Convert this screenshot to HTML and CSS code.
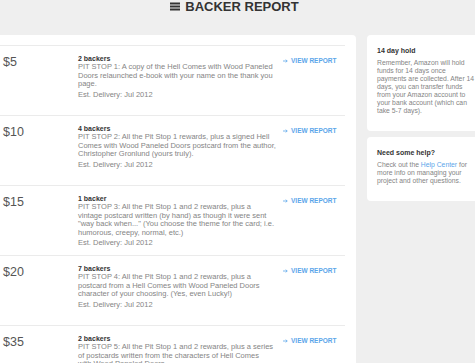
FILE: index.html
```html
<!DOCTYPE html>
<html>
<head>
<meta charset="utf-8">
<link rel="stylesheet" href="styles.css">
</head>
<body>
<header class="page-head">
  <svg class="menu-icon" width="10" height="9" viewBox="0 0 10 9"><rect x="0" y="0.5" width="10" height="2" fill="#333"/><rect x="0" y="3.5" width="10" height="2" fill="#333"/><rect x="0" y="6.5" width="10" height="2" fill="#333"/></svg>
  <h1 class="page-title">BACKER REPORT</h1>
</header>
<div class="layout">
  <main class="card rewards">
    <div class="reward-list">
      <div class="reward">
        <div class="amount">$5</div>
        <div class="info">
          <div class="backers">2 backers</div>
          <p class="desc">PIT STOP 1: A copy of the Hell Comes with Wood Paneled<br>Doors relaunched e-book with your name on the thank you<br>page.</p>
          <div class="delivery">Est. Delivery: Jul 2012</div>
        </div>
        <a class="report-link" href="#"><svg width="5" height="4" viewBox="0 0 5 4"><path d="M0 2H4.2M2.8 0.6L4.2 2L2.8 3.4" stroke="#5ba6ea" stroke-width="0.8" fill="none"/></svg>VIEW REPORT</a>
      </div>
      <div class="reward">
        <div class="amount">$10</div>
        <div class="info">
          <div class="backers">4 backers</div>
          <p class="desc">PIT STOP 2: All the Pit Stop 1 rewards, plus a signed Hell<br>Comes with Wood Paneled Doors postcard from the author,<br>Christopher Gronlund (yours truly).</p>
          <div class="delivery">Est. Delivery: Jul 2012</div>
        </div>
        <a class="report-link" href="#"><svg width="5" height="4" viewBox="0 0 5 4"><path d="M0 2H4.2M2.8 0.6L4.2 2L2.8 3.4" stroke="#5ba6ea" stroke-width="0.8" fill="none"/></svg>VIEW REPORT</a>
      </div>
      <div class="reward">
        <div class="amount">$15</div>
        <div class="info">
          <div class="backers">1 backer</div>
          <p class="desc">PIT STOP 3: All the Pit Stop 1 and 2 rewards, plus a<br>vintage postcard written (by hand) as though it were sent<br>"way back when..." (You choose the theme for the card; i.e.<br>humorous, creepy, normal, etc.)</p>
          <div class="delivery">Est. Delivery: Jul 2012</div>
        </div>
        <a class="report-link" href="#"><svg width="5" height="4" viewBox="0 0 5 4"><path d="M0 2H4.2M2.8 0.6L4.2 2L2.8 3.4" stroke="#5ba6ea" stroke-width="0.8" fill="none"/></svg>VIEW REPORT</a>
      </div>
      <div class="reward">
        <div class="amount">$20</div>
        <div class="info">
          <div class="backers">7 backers</div>
          <p class="desc">PIT STOP 4: All the Pit Stop 1 and 2 rewards, plus a<br>postcard from a Hell Comes with Wood Paneled Doors<br>character of your choosing. (Yes, even Lucky!)</p>
          <div class="delivery">Est. Delivery: Jul 2012</div>
        </div>
        <a class="report-link" href="#"><svg width="5" height="4" viewBox="0 0 5 4"><path d="M0 2H4.2M2.8 0.6L4.2 2L2.8 3.4" stroke="#5ba6ea" stroke-width="0.8" fill="none"/></svg>VIEW REPORT</a>
      </div>
      <div class="reward">
        <div class="amount">$35</div>
        <div class="info">
          <div class="backers">2 backers</div>
          <p class="desc">PIT STOP 5: All the Pit Stop 1 and 2 rewards, plus a series<br>of postcards written from the characters of Hell Comes<br>with Wood Paneled Doors.</p>
          <div class="delivery">Est. Delivery: Jul 2012</div>
        </div>
        <a class="report-link" href="#"><svg width="5" height="4" viewBox="0 0 5 4"><path d="M0 2H4.2M2.8 0.6L4.2 2L2.8 3.4" stroke="#5ba6ea" stroke-width="0.8" fill="none"/></svg>VIEW REPORT</a>
      </div>
    </div>
  </main>
  <aside class="sidebar">
    <section class="card side-card">
      <h2 class="side-title">14 day hold</h2>
      <p class="side-text">Remember, Amazon will hold<br>funds for 14 days once<br>payments are collected. After 14<br>days, you can transfer funds<br>from your Amazon account to<br>your bank account (which can<br>take 5-7 days).</p>
    </section>
    <section class="card side-card">
      <h2 class="side-title">Need some help?</h2>
      <p class="side-text">Check out the <a class="inline-link" href="#">Help Center</a> for<br>more info on managing your<br>project and other questions.</p>
    </section>
  </aside>
</div>
</body>
</html>
```

FILE: styles.css
```css
html, body {
  margin: 0;
  padding: 0;
}
body {
  background: #efefef;
  font-family: "Liberation Sans", Arial, sans-serif;
  color: #333;
  overflow: hidden;
  width: 475px;
  height: 363px;
}
.page-head {
  height: 35px;
  display: flex;
  justify-content: center;
  align-items: flex-start;
  gap: 5px;
  padding-right: 6px;
}
.menu-icon {
  margin-top: 2px;
  flex: none;
}
.page-title {
  margin: 0;
  font-size: 13px;
  line-height: 13px;
  font-weight: bold;
  color: #333;
}
.layout {
  display: flex;
  align-items: flex-start;
  margin-left: -30px;
  width: 540px;
}
.card {
  background: #fff;
  border-radius: 4px;
}
.rewards {
  width: 375px;
  padding: 10px 11px 0 0;
  flex: none;
}
.reward-list {
  border-top: 1px solid #ebebeb;
}
.reward {
  box-sizing: border-box;
  min-height: 70px;
  display: flex;
  align-items: flex-start;
  padding: 9px 0 6px 33px;
  border-bottom: 1px solid #ebebeb;
}
.amount {
  width: 75px;
  flex: none;
  font-size: 12.5px;
  line-height: 14px;
  color: #555;
}
.info {
  width: 186px;
  flex: none;
  font-size: 7.5px;
  color: #858585;
  white-space: nowrap;
}
.backers {
  font-weight: bold;
  font-size: 7px;
  color: #333;
  line-height: 8px;
}
.desc {
  margin: 0;
  line-height: 8.5px;
}
.delivery {
  margin-top: 2px;
  line-height: 8.5px;
}
.report-link {
  margin-left: 19px;
  margin-top: 1px;
  display: flex;
  align-items: center;
  gap: 3px;
  font-size: 6.5px;
  line-height: 10px;
  font-weight: bold;
  color: #5ba6ea;
  text-decoration: none;
  white-space: nowrap;
}
.sidebar {
  margin-left: 11px;
  width: 120px;
  flex: none;
  display: flex;
  flex-direction: column;
  gap: 6px;
}
.side-card {
  padding: 11px 10px 16px;
}
.side-title {
  margin: 0;
  font-size: 7px;
  line-height: 9px;
  font-weight: bold;
  color: #333;
}
.side-text {
  margin: 4px 0 0;
  font-size: 6.8px;
  line-height: 8px;
  color: #858585;
  white-space: nowrap;
}
.inline-link {
  color: #5ba6ea;
  text-decoration: none;
}
```
